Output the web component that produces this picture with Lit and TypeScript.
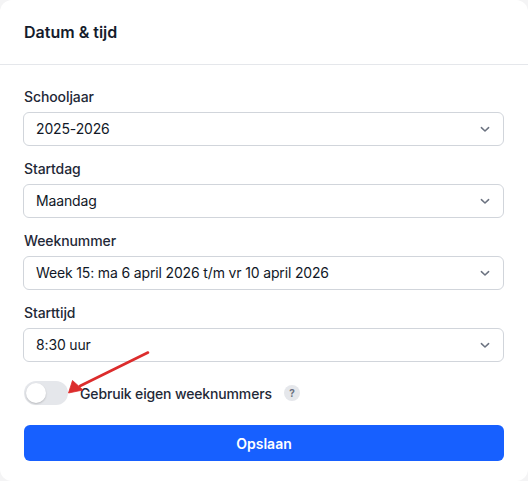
import { LitElement, html, css, svg } from "lit";
import { customElement } from "lit/decorators.js";

const fields = [
  ["Schooljaar", "2025-2026"],
  ["Startdag", "Maandag"],
  ["Weeknummer", "Week 15: ma 6 april 2026 t/m vr 10 april 2026"],
  ["Starttijd", "8:30 uur"],
];

@customElement("app-root")
export class AppRoot extends LitElement {
  static styles = css`
    :host {
      display: block;
      width: 528px;
      height: 481px;
      background: #f4f4f5;
      font-family: Inter, "Liberation Sans", sans-serif;
      color: #1a2233;
      position: relative;
      overflow: hidden;
    }
    .card {
      background: #fff;
      height: 481px;
      border-radius: 12px;
      box-sizing: border-box;
    }
    .header {
      height: 65px;
      box-sizing: border-box;
      border-bottom: 1px solid #e5e7eb;
      padding: 0 24px;
      display: flex;
      align-items: center;
      font-size: 16px;
      font-weight: 600;
      color: #151c2c;
    }
    .body {
      padding: 22px 24px 0 23px;
      display: flex;
      flex-direction: column;
    }
    .field {
      display: flex;
      flex-direction: column;
      height: 72px;
    }
    label {
      font-size: 14px;
      font-weight: 500;
      line-height: 20px;
      height: 25px;
      padding-left: 1px;
      color: #1f2937;
      letter-spacing: -0.1px;
    }
    .select {
      height: 34px;
      box-sizing: border-box;
      border: 1px solid #d1d5db;
      border-radius: 6px;
      padding: 0 12px;
      display: flex;
      align-items: center;
      justify-content: space-between;
      font-size: 14px;
      color: #111827;
      letter-spacing: -0.15px;
    }
    .select span {
      margin-bottom: 2px;
    }
    .select svg {
      width: 12px;
      height: 12px;
      color: #6b7280;
    }
    .toggle-row {
      display: flex;
      align-items: center;
      height: 24px;
      margin-top: 6px;
      margin-left: 1px;
      font-size: 14px;
      font-weight: 500;
      color: #1f2937;
      letter-spacing: -0.15px;
    }
    .toggle {
      width: 44px;
      height: 24px;
      border-radius: 12px;
      background: #e5e7eb;
      padding: 2px;
      box-sizing: border-box;
      margin-right: 12px;
    }
    .knob {
      width: 20px;
      height: 20px;
      border-radius: 50%;
      background: #fff;
      box-shadow: 0 1px 2px rgba(0, 0, 0, 0.2);
    }
    .help {
      width: 16px;
      height: 16px;
      border-radius: 50%;
      background: #e5e7eb;
      color: #6b7280;
      font-size: 10px;
      font-weight: 700;
      display: flex;
      align-items: center;
      justify-content: center;
      margin-left: 12px;
    }
    button {
      margin: 20px 0 0 1px;
      height: 36px;
      width: 480px;
      border: none;
      border-radius: 6px;
      background: #1760ff;
      color: #fff;
      font: 600 14px Inter, "Liberation Sans", sans-serif;
    }
    .arrow {
      position: absolute;
      left: 0;
      top: 0;
      width: 528px;
      height: 481px;
      pointer-events: none;
    }
  `;

  render() {
    return html`
      <div class="card">
        <div class="header">Datum &amp; tijd</div>
        <div class="body">
          ${fields.map(
            ([l, v]) => html`
              <div class="field">
                <label>${l}</label>
                <div class="select">
                  <span>${v}</span>
                  <svg viewBox="0 0 12 12" fill="none" stroke="currentColor" stroke-width="1.5" stroke-linecap="round" stroke-linejoin="round">
                    <path d="M2.4 4.6 6 8l3.6-3.4" />
                  </svg>
                </div>
              </div>
            `
          )}
          <div class="toggle-row">
            <div class="toggle"><div class="knob"></div></div>
            <span>Gebruik eigen weeknummers</span>
            <div class="help">?</div>
          </div>
          <button>Opslaan</button>
        </div>
      </div>
      <svg class="arrow" viewBox="0 0 528 481">
        ${svg`<path d="M148 352.5 L80 386" stroke="#dc2c2c" stroke-width="2.6" stroke-linecap="round" fill="none"/>
        <path d="M68.5 393 L72.5 380.5 L83 390 Z" fill="#dc2c2c" stroke="#dc2c2c" stroke-width="0.8" stroke-linejoin="round"/>`}
      </svg>
    `;
  }
}
